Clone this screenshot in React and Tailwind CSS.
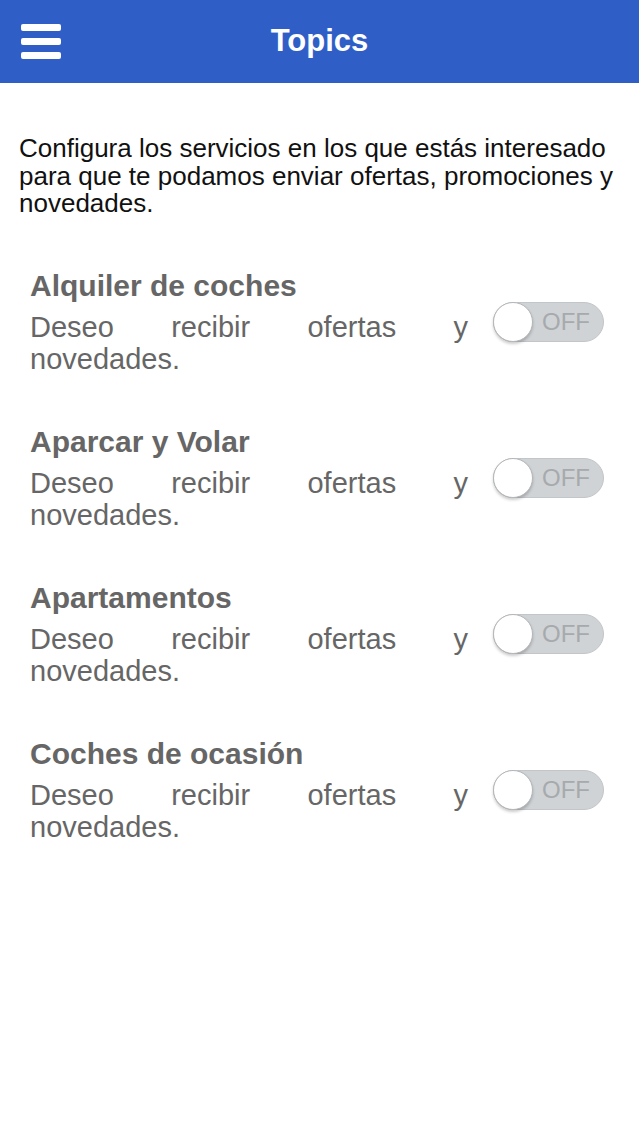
import React from "react";

const topics = [
  "Alquiler de coches",
  "Aparcar y Volar",
  "Apartamentos",
  "Coches de ocasión",
];

const OffSwitch = () => (
  <div className="relative flex h-[40px] w-[111px] shrink-0 items-center rounded-full border border-[#c3c6c8] bg-[#d0d3d5]">
    <div className="absolute left-[-1px] top-[-1px] h-[40px] w-[40px] rounded-full border border-[#b4b7b9] bg-white shadow-[0_2px_3px_rgba(0,0,0,0.2)]"></div>
    <span className="ml-[48px] text-[24px] leading-none text-[#a7aaad]">OFF</span>
  </div>
);

export default function App() {
  return (
    <div
      className="min-h-[1136px] w-full bg-white"
      style={{ fontFamily: '"Liberation Sans", Arial, Helvetica, sans-serif' }}
    >
      {/* cabecera */}
      <div className="flex h-[83px] items-center bg-[#2f5ec7]">
        <div className="flex w-[82px] flex-col gap-[7px] pl-[21px]">
          <div className="h-[7px] w-[40px] rounded-[2px] bg-white"></div>
          <div className="h-[7px] w-[40px] rounded-[2px] bg-white"></div>
          <div className="h-[7px] w-[40px] rounded-[2px] bg-white"></div>
        </div>
        <div className="flex-1 text-center text-[31px] font-bold text-white">Topics</div>
        <div className="w-[82px]"></div>
      </div>

      <p className="pl-[19px] pr-[16px] pt-[52px] text-[26px] leading-[27.5px] text-[#111]">
        Configura los servicios en los que estás interesado para que te podamos enviar ofertas, promociones y novedades.
      </p>

      <div className="mt-[52px] flex flex-col gap-[51px]">
        {topics.map((t) => (
          <div key={t} className="flex items-center pl-[30px] pr-[35px]">
            <div className="w-[438px]">
              <div className="text-[30px] font-bold leading-[32px] text-[#666]">{t}</div>
              <div className="mt-[9px] text-justify text-[29px] leading-[32px] text-[#666]">
                Deseo recibir ofertas y novedades.
              </div>
            </div>
            <div className="ml-[25px]">
              <OffSwitch />
            </div>
          </div>
        ))}
      </div>
    </div>
  );
}
